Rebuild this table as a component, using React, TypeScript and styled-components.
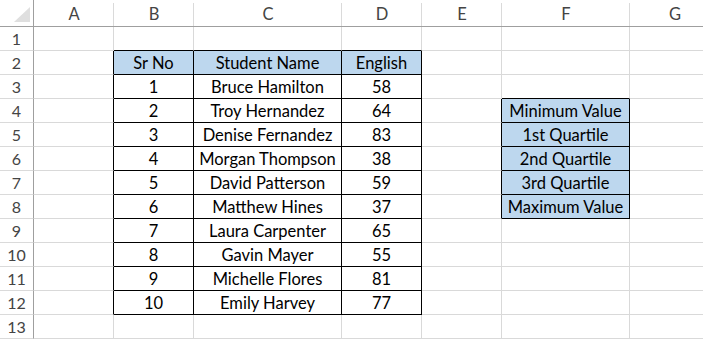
import styled, { createGlobalStyle } from 'styled-components';

const GlobalStyle = createGlobalStyle`
  html, body {
    margin: 0;
    padding: 0;
    background: #ffffff;
  }
  body {
    font-family: Lato, 'Open Sans', sans-serif;
  }
`;

const COLS = ['A', 'B', 'C', 'D', 'E', 'F', 'G'];
const WIDTHS = [80, 80, 148, 80, 80, 128, 90];
const ROW_COUNT = 13;

const students = [
  ['Bruce Hamilton', 58],
  ['Troy Hernandez', 64],
  ['Denise Fernandez', 83],
  ['Morgan Thompson', 38],
  ['David Patterson', 59],
  ['Matthew Hines', 37],
  ['Laura Carpenter', 65],
  ['Gavin Mayer', 55],
  ['Michelle Flores', 81],
  ['Emily Harvey', 77],
];

const stats = ['Minimum Value', '1st Quartile', '2nd Quartile', '3rd Quartile', 'Maximum Value'];

// r: 1-based row, c: 0-based column index (A = 0)
const inMainTable = (r: number, c: number) => r >= 2 && r <= 12 && c >= 1 && c <= 3;
const inStatTable = (r: number, c: number) => r >= 4 && r <= 8 && c === 5;
const boxed = (r: number, c: number) => inMainTable(r, c) || inStatTable(r, c);

const cellText = (r: number, c: number): string => {
  if (r === 2) {
    if (c === 1) return 'Sr No';
    if (c === 2) return 'Student Name';
    if (c === 3) return 'English';
  }
  if (r >= 3 && r <= 12) {
    const s = students[r - 3];
    if (c === 1) return String(r - 2);
    if (c === 2) return s[0] as string;
    if (c === 3) return String(s[1]);
  }
  if (inStatTable(r, c)) return stats[r - 4];
  return '';
};

const Sheet = styled.div`
  display: grid;
  grid-template-columns: 34px ${WIDTHS.map((w) => `${w}px`).join(' ')};
  grid-template-rows: 27px repeat(${ROW_COUNT}, 24px);
  width: 703px;
  height: 339px;
  overflow: hidden;
`;

const Corner = styled.div`
  border-right: 1px solid #9f9f9f;
  border-bottom: 1px solid #9f9f9f;
  display: flex;
  align-items: flex-end;
  justify-content: flex-end;
  padding: 0 3px 4px 0;
`;

const ColHead = styled.div`
  position: relative;
  border-bottom: 1px solid #9f9f9f;
  display: flex;
  align-items: center;
  justify-content: center;
  font-size: 16.5px;
  color: #444444;
  padding-top: 2px;

  &::after {
    content: '';
    position: absolute;
    top: 3px;
    bottom: 0;
    right: 0;
    width: 1px;
    background: #dadada;
  }
`;

const RowHead = styled.div`
  border-right: 1px solid #9f9f9f;
  border-bottom: 1px solid #dadada;
  display: flex;
  align-items: center;
  justify-content: center;
  font-size: 16px;
  color: #444444;
`;

const Cell = styled.div<{ $rb: boolean; $bb: boolean; $fill: boolean }>`
  border-right: 1px solid ${(p) => (p.$rb ? '#000000' : '#d9d9d9')};
  border-bottom: 1px solid ${(p) => (p.$bb ? '#000000' : '#d9d9d9')};
  background: ${(p) => (p.$fill ? '#bdd7ee' : '#ffffff')};
  display: flex;
  align-items: center;
  justify-content: center;
  font-size: 16.5px;
  color: #000000;
  white-space: nowrap;
  overflow: visible;
  padding-top: 1px;
`;

export default function App() {
  const rows = Array.from({ length: ROW_COUNT }, (_, i) => i + 1);
  return (
    <>
      <GlobalStyle />
      <Sheet>
        <Corner>
          <svg width="16" height="15" viewBox="0 0 16 15">
            <polygon points="16,0 16,15 0,15" fill="#dfdfdf" />
          </svg>
        </Corner>
        {COLS.map((c) => (
          <ColHead key={c}>{c}</ColHead>
        ))}
        {rows.map((r) => [
          <RowHead key={`h${r}`}>{r}</RowHead>,
          ...COLS.map((_, c) => (
            <Cell
              key={`${r}-${c}`}
              $rb={boxed(r, c) || boxed(r, c + 1)}
              $bb={boxed(r, c) || boxed(r + 1, c)}
              $fill={(r === 2 && inMainTable(r, c)) || inStatTable(r, c)}
            >
              {cellText(r, c)}
            </Cell>
          )),
        ])}
      </Sheet>
    </>
  );
}
